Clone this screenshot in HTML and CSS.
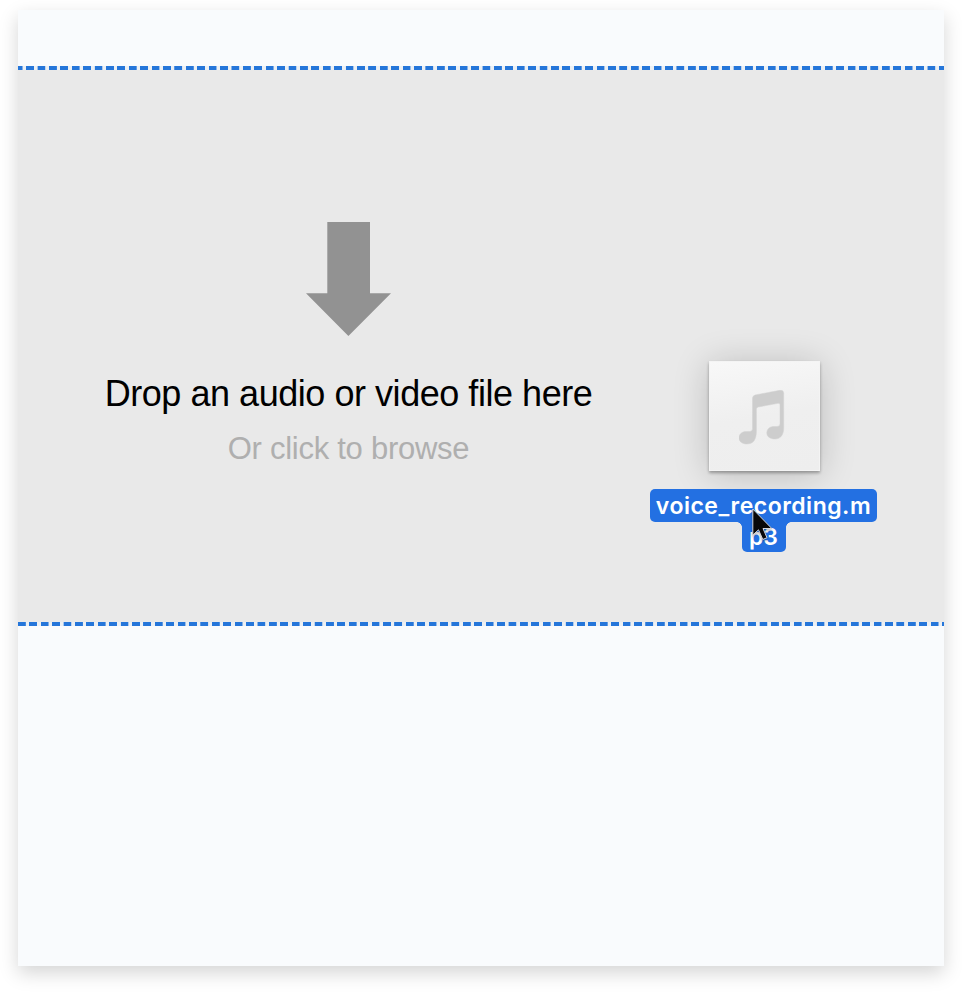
FILE: index.html
```
<!DOCTYPE html>
<html lang="en">
<head>
<meta charset="utf-8">
<title>Drop a file</title>
<link rel="stylesheet" href="styles.css">
</head>
<body>
<main class="card">
  <section class="dropzone">
    <div class="prompt">
      <svg class="arrow" width="85" height="114" viewBox="0 0 85 114" aria-hidden="true"><path d="M21.3 0H64V71.3H85L42.4 114 0 71.3H21.3Z" fill="#929292"/></svg>
      <h1 class="title">Drop an audio or video file here</h1>
      <p class="subtitle">Or click to browse</p>
    </div>
  </section>
  <div class="dragged">
    <div class="thumb">
      <svg width="46" height="56" viewBox="0 0 46 56" aria-hidden="true"><path d="M13.5 8.5Q13.5 5.7 16.2 5L40.8.3Q44.7-.2 44.7 3.3V38C44.7 45 41.5 49 36 49C31 49 27.8 46.5 27.8 43C27.8 39 30.8 36.5 35 36.5H38Q41 36.5 41 33.8V14.8Q41 13 39 13.3L19.3 17Q17.4 17.4 17.4 19V41C17.4 49.5 14.5 54 7.8 54C3.2 54 0 51.5 0 48C0 44 3 41.5 7.2 41.5H10.5Q13.5 41.5 13.5 38.5Z" fill="#cdcdcd" stroke="#d3d3d3" stroke-width=".5"/></svg>
    </div>
    <div class="filename"><span class="line">voice_recording.m</span><span class="line second">p3</span></div>
    <svg class="cursor" width="26" height="38" viewBox="0 0 26 38" aria-hidden="true"><path d="M1.8 1V27L7.5 21.8L11.8 31.5L16 29.7L12 20.5H20.8Z" fill="#080808" stroke="#d4d6dc" stroke-width="1"/></svg>
  </div>
</main>
</body>
</html>
```
FILE: styles.css
```
* { box-sizing: border-box; }
body {
  margin: 0;
  padding: 10px 18px 26px;
  height: 992px;
  background: #fff;
  font-family: "Liberation Sans", Arial, sans-serif;
  overflow: hidden;
}
.card {
  position: relative;
  height: 956px;
  padding-top: 56px;
  background: #f9fbfd;
  box-shadow: 0 7px 18px rgba(0, 0, 0, .17);
}
.dropzone {
  position: relative;
  height: 559.5px;
  padding-top: 156px;
  background: #e9e9e9;
}
.dropzone::before,
.dropzone::after {
  content: "";
  position: absolute;
  left: 0;
  right: 0;
  height: 4px;
  background: repeating-linear-gradient(90deg, #2576da 0 7.4px, #edf0f3 8px 11.2px, #2576da 11.41px);
}
.dropzone::before { top: 0; background-position: -3.2px 0; background-size: calc(100% + 12px) 100%; }
.dropzone::after { bottom: 0; }
.prompt {
  width: 661px;
  display: flex;
  flex-direction: column;
  align-items: center;
}
.arrow { display: block; }
.title {
  margin: 36px 0 0;
  font-size: 36px;
  line-height: 43px;
  letter-spacing: -.46px;
  font-weight: 400;
  color: #000;
  white-space: nowrap;
}
.subtitle {
  margin: 15px 0 0;
  font-size: 31px;
  line-height: 38px;
  letter-spacing: -.27px;
  color: #afafaf;
  white-space: nowrap;
}
.dragged {
  position: absolute;
  left: 632px;
  top: 351px;
  width: 227px;
  display: flex;
  flex-direction: column;
  align-items: center;
}
.thumb {
  width: 111px;
  height: 110px;
  margin-left: 2px;
  padding: 28px 0 0 29px;
  background: linear-gradient(170deg, #f8f8f8, #efefef 50%, #eee);
  border: 1px solid #f4f4f4;
  box-shadow: 0 2px 3px rgba(0, 0, 0, .32), 0 3px 36px rgba(0, 0, 0, .2);
}
.filename {
  margin-top: 18px;
  display: flex;
  flex-direction: column;
  align-items: center;
  font-family: Inter, sans-serif;
  font-size: 23px;
  font-weight: 600;
  color: #fff;
}
.line {
  width: 227px;
  height: 33px;
  line-height: 35px;
  border-radius: 5px;
  background: #2370e2;
  letter-spacing: .5px;
  text-align: center;
  white-space: nowrap;
}
.second {
  position: relative;
  width: 44px;
  height: 30px;
  line-height: 30px;
  letter-spacing: 0;
  border-radius: 0 0 5px 5px;
}
.second::before,
.second::after {
  content: "";
  position: absolute;
  top: 0;
  width: 5px;
  height: 5px;
}
.second::before { right: 100%; background: radial-gradient(circle at 0 100%, transparent 4.5px, #2370e2 5px); }
.second::after { left: 100%; background: radial-gradient(circle at 100% 100%, transparent 4.5px, #2370e2 5px); }
.cursor {
  position: absolute;
  left: 101px;
  top: 147px;
  filter: drop-shadow(0 2px 1px rgba(0, 0, 0, .25));
}
```
